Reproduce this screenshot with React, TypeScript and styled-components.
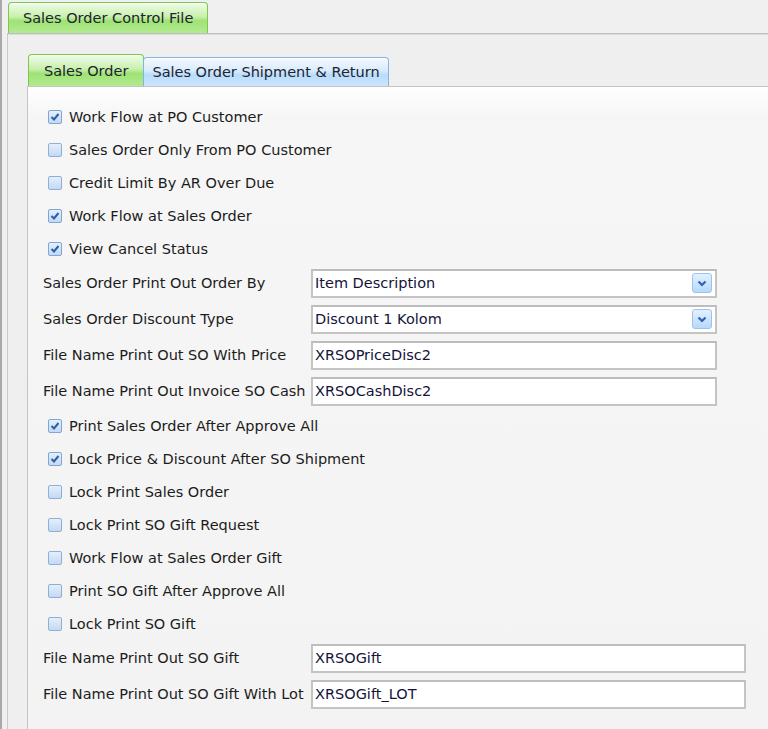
import styled, { createGlobalStyle } from "styled-components";

const GlobalStyle = createGlobalStyle`
  html, body {
    margin: 0;
    padding: 0;
    background: #f0f0f0;
    overflow: hidden;
  }
  body {
    font-family: "DejaVu Sans", Tahoma, sans-serif;
    font-size: 14.5px;
    color: #1c1c1c;
  }
`;

type Row =
  | { kind: "check"; label: string; checked: boolean }
  | { kind: "combo"; label: string; value: string }
  | { kind: "text"; label: string; value: string; wide?: boolean };

const rows: Row[] = [
  { kind: "check", label: "Work Flow at PO Customer", checked: true },
  { kind: "check", label: "Sales Order Only From PO Customer", checked: false },
  { kind: "check", label: "Credit Limit By AR Over Due", checked: false },
  { kind: "check", label: "Work Flow at Sales Order", checked: true },
  { kind: "check", label: "View Cancel Status", checked: true },
  { kind: "combo", label: "Sales Order Print Out Order By", value: "Item Description" },
  { kind: "combo", label: "Sales Order Discount Type", value: "Discount 1 Kolom" },
  { kind: "text", label: "File Name Print Out SO With Price", value: "XRSOPriceDisc2" },
  { kind: "text", label: "File Name Print Out Invoice SO Cash", value: "XRSOCashDisc2" },
  { kind: "check", label: "Print Sales Order After Approve All", checked: true },
  { kind: "check", label: "Lock Price & Discount After SO Shipment", checked: true },
  { kind: "check", label: "Lock Print Sales Order", checked: false },
  { kind: "check", label: "Lock Print SO Gift Request", checked: false },
  { kind: "check", label: "Work Flow at Sales Order Gift", checked: false },
  { kind: "check", label: "Print SO Gift After Approve All", checked: false },
  { kind: "check", label: "Lock Print SO Gift", checked: false },
  { kind: "text", label: "File Name Print Out SO Gift", value: "XRSOGift", wide: true },
  { kind: "text", label: "File Name Print Out SO Gift With Lot", value: "XRSOGift_LOT", wide: true },
];

const Screen = styled.div`
  display: flex;
  height: 729px;
  border-left: 2px solid #a9a9a9;
  box-sizing: border-box;
`;

const Outer = styled.div`
  flex: 1;
  display: flex;
  flex-direction: column;
  margin-left: 5px;
  padding-top: 2px;
  min-width: 0;
`;

const TabStrip = styled.div<{ indent?: number }>`
  display: flex;
  align-items: flex-end;
  padding-left: ${({ indent }) => indent || 0}px;
`;

const Tab = styled.div<{ active?: boolean; height: number; pad: number }>`
  height: ${({ height }) => height}px;
  box-sizing: border-box;
  display: flex;
  align-items: center;
  padding: 0 ${({ pad }) => pad}px;
  border: 1px solid ${({ active }) => (active ? "#79c94c" : "#84b4e4")};
  border-bottom: none;
  border-radius: 4px 4px 0 0;
  background: ${({ active }) =>
    active
      ? "linear-gradient(#effbe8 0%, #c9f0ae 45%, #9ee274 60%, #b4ea92 100%)"
      : "linear-gradient(#f4f9ff 0%, #d9ebfd 45%, #b9dcfb 60%, #cbe5fd 100%)"};
  box-shadow: inset 0 1px 0 rgba(255, 255, 255, 0.8);
  white-space: nowrap;
  color: #1e2430;
  margin-right: -1px;
`;

const OuterPanel = styled.div`
  flex: 1;
  border-top: 1px solid #bdbdbd;
  border-left: 1px solid #c9c9c9;
  box-shadow: inset 0 1px 0 #dcdcdc;
  background: #efefef;
  padding: 20px 0 0 19px;
  display: flex;
  flex-direction: column;
`;

const InnerPanel = styled.div`
  flex: 1;
  border-top: 1px solid #c4c4c4;
  border-left: 1px solid #c4c4c4;
  background: linear-gradient(#ffffff 0px, #f6f6f6 30px, #f3f3f3 100%);
  padding: 13px 0 0 15px;
  display: flex;
  flex-direction: column;
`;

const CheckRow = styled.label`
  height: 33px;
  display: flex;
  align-items: center;
  gap: 7px;
  padding-left: 5px;
  white-space: nowrap;
`;

const Box = styled.span<{ checked: boolean }>`
  width: 14px;
  height: 14px;
  flex: none;
  box-sizing: border-box;
  border: 1px solid ${({ checked }) => (checked ? "#7fa6d4" : "#8eafd6")};
  border-radius: 2px;
  background: linear-gradient(#e4effc, #c4d9f3);
  display: flex;
  align-items: center;
  justify-content: center;
`;

const FieldRow = styled.div`
  height: 36px;
  display: flex;
  align-items: center;
`;

const FieldLabel = styled.span`
  width: 268px;
  flex: none;
  white-space: nowrap;
`;

const Input = styled.div<{ wide?: boolean }>`
  width: ${({ wide }) => (wide ? 435 : 406)}px;
  height: 29px;
  flex: none;
  box-sizing: border-box;
  border: 2px solid #c4c4c4;
  border-top-color: #bdbdbd;
  background: #fff;
  display: flex;
  align-items: center;
  padding: 0 2px 0 2px;
  color: #14143a;
`;

const Value = styled.span`
  flex: 1;
`;

const DropButton = styled.span`
  width: 20px;
  height: 20px;
  box-sizing: border-box;
  border: 1px solid #9cc3ec;
  border-radius: 3px;
  background: linear-gradient(#e3f1ff, #b7d9fb);
  display: flex;
  align-items: center;
  justify-content: center;
  margin-right: 1px;
`;

const Check = () => (
  <svg width="10" height="10" viewBox="0 0 10 10">
    <path d="M1.5 5 L4 7.5 L8.5 2" fill="none" stroke="#2b5fae" strokeWidth="2" />
  </svg>
);

const Chevron = () => (
  <svg width="10" height="7" viewBox="0 0 10 7">
    <path d="M1.5 1.5 L5 5 L8.5 1.5" fill="none" stroke="#2d62b4" strokeWidth="2.2" />
  </svg>
);

export default function App() {
  return (
    <>
      <GlobalStyle />
      <Screen>
        <Outer>
          <TabStrip indent={1}>
            <Tab active height={31} pad={14}>
              Sales Order Control File
            </Tab>
          </TabStrip>
          <OuterPanel>
            <TabStrip indent={1}>
              <Tab active height={32} pad={15}>
                Sales Order
              </Tab>
              <Tab height={29} pad={8}>
                Sales Order Shipment &amp; Return
              </Tab>
            </TabStrip>
            <InnerPanel>
              {rows.map((row, idx) =>
                row.kind === "check" ? (
                  <CheckRow key={idx}>
                    <Box checked={row.checked}>{row.checked && <Check />}</Box>
                    {row.label}
                  </CheckRow>
                ) : (
                  <FieldRow key={idx}>
                    <FieldLabel>{row.label}</FieldLabel>
                    <Input wide={row.kind === "text" && row.wide}>
                      <Value>{row.value}</Value>
                      {row.kind === "combo" && (
                        <DropButton>
                          <Chevron />
                        </DropButton>
                      )}
                    </Input>
                  </FieldRow>
                )
              )}
            </InnerPanel>
          </OuterPanel>
        </Outer>
      </Screen>
    </>
  );
}
